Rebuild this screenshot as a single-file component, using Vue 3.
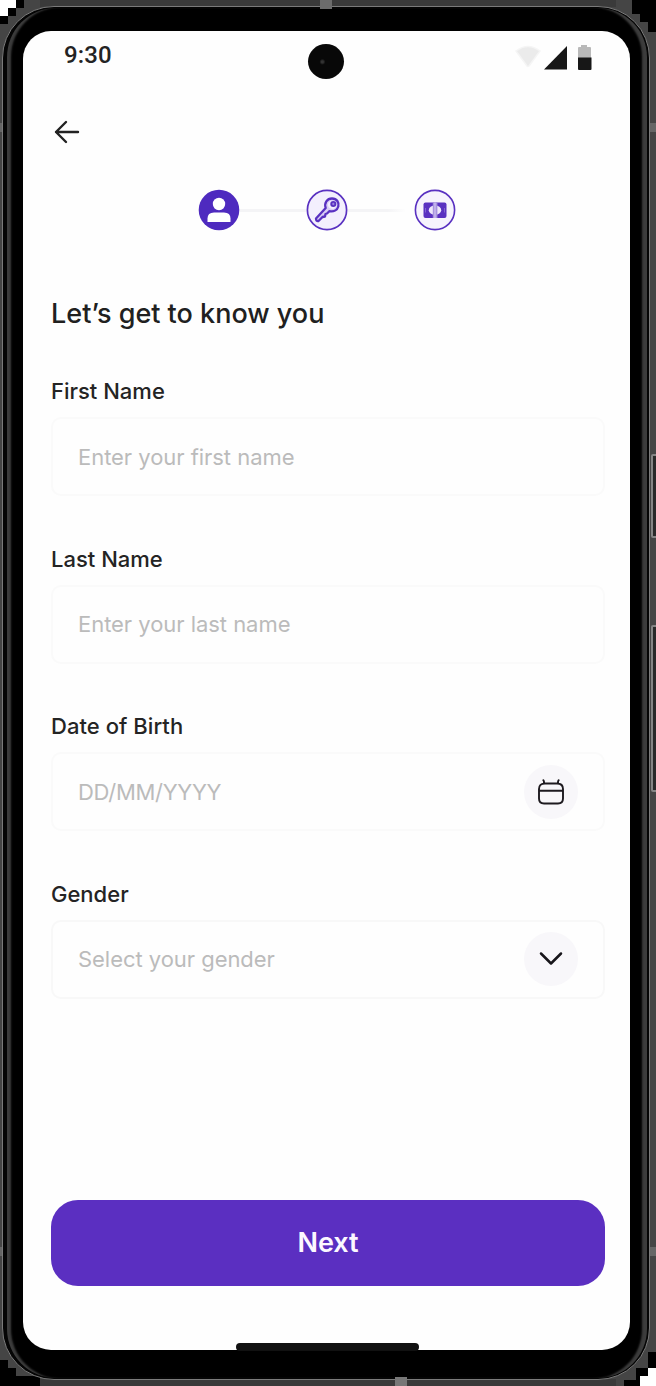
<script setup>
const fields = [
  { label: 'First Name', hint: 'Enter your first name', cls: 'first' },
  { label: 'Last Name', hint: 'Enter your last name', cls: 'last' },
  { label: 'Date of Birth', hint: 'DD/MM/YYYY', cls: 'date', icon: 'calendar' },
  { label: 'Gender', hint: 'Select your gender', cls: 'gender', icon: 'chevron' },
]
</script>

<template>
  <div class="stage">
    <svg class="corners" width="656" height="1386" viewBox="0 0 656 1386" shape-rendering="crispEdges">
      <path fill="#000" d="M0 16H8V8H16V0H24V8H16V16H8V24H0Z" />
      <path fill="#fff" d="M0 0H16V8H8V16H0Z" />
      <path fill="#000" d="M632 0H656V32H648V22H640V14H632Z" />
      <path fill="#000" d="M0 1360H8V1368H16V1376H40V1386H0Z" />
      <path fill="#000" d="M648 1352H656V1368H648V1376H640V1386H624V1380H636V1368H648Z" />
      <path fill="#fff" d="M656 1368H648V1376H640V1386H656Z" />
    </svg>
    <i class="band band-top"></i>
    <i class="band band-bottom"></i>
    <i class="seam seam-lt"></i><i class="seam seam-lb"></i>
    <i class="seam seam-rt"></i><i class="seam seam-rb"></i>
    <i class="key key-power"></i>
    <i class="key key-volume"></i>

    <div class="device">
      <div class="bezel">
        <main class="screen">
          <header class="status">
            <span class="time">9:30</span>
            <svg class="signals" width="80" height="30" viewBox="0 0 80 30">
              <path d="M1 7Q13-2 25 7L14 22Q13 23 12 22Z" fill="#ebebeb" stroke="#f5f5f5" stroke-width="1.500" />
              <path d="M52 2V25.500H29Z" fill="#171717" />
              <path d="M63 4Q63 3 64 3H66V1H72V3H75Q76 3 76 4V14H63Z" fill="#b9b9b9" />
              <path d="M63 13.500H76.500V25Q76.500 26 75.500 26H64Q63 26 63 25Z" fill="#171717" />
            </svg>
          </header>

          <svg class="back" width="26" height="24" viewBox="0 0 26 24" fill="none" stroke="#222" stroke-width="2.400" stroke-linecap="round" stroke-linejoin="round">
            <path d="M24 12H2M12 2L2 12L12 22" />
          </svg>

          <nav class="steps">
            <svg width="42" height="42" viewBox="0 0 42 42">
              <circle cx="21" cy="21" r="20.300" fill="#4e2abf" />
              <circle cx="21" cy="15" r="6.200" fill="#fff" />
              <path d="M9.500 33V29.500Q9.500 23.500 16 23.500H26Q32.500 23.500 32.500 29.500V33Z" fill="#fff" />
            </svg>
            <i class="rail"></i>
            <svg width="42" height="42" viewBox="0 0 42 42" fill="none" stroke="#5931c1" stroke-linejoin="round">
              <circle cx="21" cy="21" r="19.600" fill="#f3effd" stroke-width="1.700" />
              <path d="M19.700 19C18 14 21 9.500 26 9.500C31 9.500 33.300 13.500 32.300 17.500C31.300 21.300 27.500 23 23.500 22.200L21 24.500L19.500 25L19 27.500L16.500 28L12.500 32Q10 32.500 10 29.500Z" stroke-width="2.300" fill="#d9cef5" />
              <path d="M24.500 19.500C20.500 17.500 21.500 11.700 26 11.700C30 11.700 31.500 15 30 18C28.800 20 26.500 20.500 24.500 19.500Z" fill="#f3effd" stroke="none" />
              <circle cx="27.300" cy="15" r="2.100" stroke-width="1.900" fill="#9a82db" />
            </svg>
            <i class="rail faded"></i>
            <svg width="42" height="42" viewBox="0 0 42 42">
              <circle cx="21" cy="21" r="19.600" fill="#f6f3fd" stroke="#5931c1" stroke-width="1.600" />
              <rect x="9.500" y="13.500" width="23" height="15.500" rx="2" fill="#5931c1" />
              <ellipse cx="21" cy="21.200" rx="6.200" ry="4.800" fill="#eee8fb" />
              <rect x="18.800" y="13.500" width="4.600" height="15.500" fill="#a793df" />
              <path d="M21 13.500V29" stroke="#d9cef4" stroke-width="1" />
              <path d="M11.500 19V23.500M30.500 19V23.500" stroke="#8063d1" stroke-width="1" />
            </svg>
          </nav>

          <h1>Let’s get to know you</h1>

          <section v-for="f in fields" :key="f.label" class="field" :class="f.cls">
            <label>{{ f.label }}</label>
            <div class="box">
              <span>{{ f.hint }}</span>
              <div v-if="f.icon" class="bubble">
                <svg v-if="f.icon === 'calendar'" width="28" height="28" viewBox="0 0 28 28" fill="none" stroke="#1d1a1f" stroke-width="1.900" stroke-linecap="round">
                  <path d="M2 12V20.500Q2 25.500 7 25.500H21Q26 25.500 26 20.500V11Q26 5.500 20 5.500H8Q2 5.500 2 11ZM2 12.700H26M7 5.500V4Q7 3 6.300 2.200M21 5.500V4Q21 3 21.700 2.200" />
                </svg>
                <svg v-else width="28" height="28" viewBox="0 0 28 28" fill="none" stroke="#17151a" stroke-width="2.500" stroke-linecap="round" stroke-linejoin="round">
                  <path d="M4 8.500L14 18.500L24 8.500" />
                </svg>
              </div>
            </div>
          </section>

          <button class="next">Next</button>
        </main>
      </div>
    </div>
    <i class="seam seam-top"></i><i class="seam seam-bottom"></i>
    <i class="camera"></i>
    <i class="home"></i>
  </div>
</template>

<style>
html, body { margin: 0; overflow: hidden; }
</style>

<style scoped>
* { box-sizing: border-box; }
.stage {
  position: relative;
  width: 656px;
  height: 1386px;
  padding: 6px 6px 6px 2px;
  overflow: hidden;
  background: #454545;
  font-family: Inter, "Liberation Sans", sans-serif;
}
.corners { position: absolute; left: 0; top: 0; }
.band { position: absolute; left: 40px; right: 40px; height: 7px; background: #3a3a3a; }
.band-top { top: 0; }
.band-bottom { bottom: 0; }
.seam { position: absolute; background: #666; width: 3px; height: 9px; }
.seam-lt { left: 0; top: 123px; }
.seam-lb { left: 0; top: 1247px; }
.seam-rt { right: 0; top: 123px; width: 6px; }
.seam-rb { right: 0; top: 1247px; width: 6px; }
.seam-top { left: 320px; top: 0; width: 12px; height: 9px; background: #6c6c6c; }
.seam-bottom { left: 395px; bottom: 0; width: 12px; height: 9px; background: #777; }
.key { position: absolute; left: 651px; width: 8px; border: 2px solid #858585; background: #292929; border-radius: 2px; }
.key-power { top: 454px; height: 84px; }
.key-volume { top: 625px; height: 167px; }
.device {
  position: relative;
  width: 648px;
  height: 1374px;
  padding: 1px 2px 1px 4px;
  border: 1.500px solid #7b7b7b;
  border-radius: 52px;
  background: #050505;
}
.bezel {
  height: 100%;
  padding: 23px 14px 27px 16px;
  border-radius: 49px;
  background: #000;
  box-shadow: inset 5px 0 2px -1px #3c3c3c, inset -6px 0 2px -1px #3c3c3c;
}
.screen {
  display: flex;
  flex-direction: column;
  width: 607px;
  height: 1319px;
  padding: 10px 25px 0 28px;
  background: #fefefe;
  border-radius: 28px;
}
.status { display: flex; justify-content: space-between; height: 34px; padding: 0 10px 0 13px; }
.time { font: 500 24px/29px Roboto, sans-serif; color: #232323; letter-spacing: 0.1px; }
.signals { margin-top: 3px; }
.back { margin: 45px 0 0 3px; flex: none; }
.steps { display: flex; align-items: center; height: 42px; margin: 45px 0 0 147px; width: 258px; }
.steps svg { flex: none; }
.rail { flex: 1; height: 3px; background: #f4f4f6; }
.faded { background: linear-gradient(90deg, #f4f4f6 60%, #fefefe 88%); }
h1 { margin: 63px 0 0; font-size: 27px; line-height: 40px; font-weight: 500; color: #202020; white-space: nowrap; }
.field { height: 167.500px; flex: none; }
.field.first { margin-top: 42px; }
label { display: block; font-size: 22px; line-height: 30px; height: 41px; font-weight: 500; color: #242424; }
.date label { letter-spacing: 0.05px; }
.box {
  display: flex;
  align-items: center;
  justify-content: space-between;
  height: 79px;
  padding: 0 25px 0 25px;
  border: 2px solid #fafafa;
  border-radius: 10px;
  color: #bbb;
  font-size: 22px;
  letter-spacing: -0.04px;
}
.date .box { letter-spacing: -0.3px; }
.gender .box { border-color: #f8f8f8; }
.bubble { display: flex; align-items: center; justify-content: center; width: 54px; height: 54px; border-radius: 50%; background: #f8f7fa; }
.next {
  flex: none;
  width: 554px;
  height: 86px;
  margin-top: 154px;
  border: 0;
  border-radius: 27px;
  background: #5b2fc1;
  color: #fcf8ff;
  font: 600 27px/86px Inter, sans-serif;
  padding: 0;
}
.camera { position: absolute; left: 308px; top: 44px; width: 36px; height: 35px; border-radius: 50%; background: radial-gradient(circle at 40% 51%, #333 0 1px, #080808 3px); }
.home { position: absolute; left: 236px; top: 1343px; width: 183px; height: 8px; border-radius: 4px; background: #111; }
</style>
